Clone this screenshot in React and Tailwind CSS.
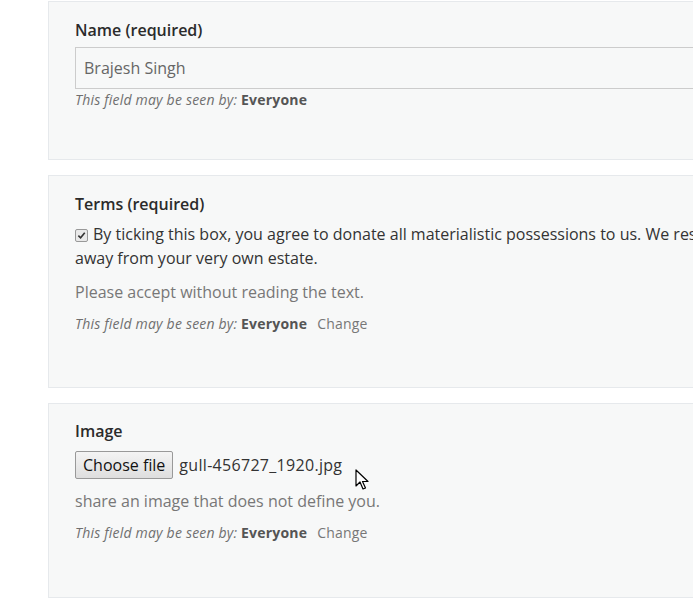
import React from 'react';

const font = { fontFamily: '"Open Sans", "Liberation Sans", sans-serif' };

function Visibility({ change = true }) {
    return (
        <p className="text-[14px] leading-[20px] tracking-[0.2px] text-[#6f6f6f]">
            <span className="italic">This field may be seen by:</span>{' '}
            <strong className="font-bold text-[#555]">Everyone</strong>
            {change && <span className="ml-[10px] text-[#777]">Change</span>}
        </p>
    );
}

function Card({ className = '', children }) {
    return (
        <div className={`w-[760px] border border-[#e6e9ec] bg-[#f7f8f8] pl-[26px] ${className}`}>
            {children}
        </div>
    );
}

export default function App() {
    return (
        <div className="relative h-[607px] w-[693px] overflow-hidden bg-white text-[#333]" style={font}>
            <div className="flex flex-col gap-[15px] pl-[48px] pt-px">
                <Card className="pt-[16px] pb-[49px]">
                    <label className="block text-[16px] font-semibold leading-[24px] text-[#2b2b2b]">
                        Name (required)
                    </label>
                    <div className="mt-[5px] flex h-[42px] w-[700px] items-center border border-[#ccc] bg-[#f7f8f8] px-[8px] text-[16px] text-[#666]">
                        Brajesh Singh
                    </div>
                    <div className="mt-px">
                        <Visibility change={false} />
                    </div>
                </Card>

                <Card className="pt-[16px] pb-[53px]">
                    <label className="block text-[16px] font-semibold leading-[24px] text-[#2b2b2b]">
                        Terms (required)
                    </label>
                    <p className="mt-[6px] whitespace-nowrap text-[16px] leading-[24px] text-[#333]">
                        <span className="relative top-[1px] mr-[5px] inline-flex h-[13px] w-[13px] items-center justify-center rounded-[2px] border border-[#999] bg-[#e9e9e9] align-[1px]">
                            <svg viewBox="0 0 10 10" className="h-[9px] w-[9px]">
                                <path d="M1.5 5.2 L4 7.6 L8.6 2" fill="none" stroke="#333" strokeWidth="1.8" />
                            </svg>
                        </span>
                        By ticking this box, you agree to donate all materialistic possessions to us. We reserve the right to take them
                        <br />
                        away from your very own estate.
                    </p>
                    <p className="mt-[10px] text-[16px] leading-[24px] text-[#777]">
                        Please accept without reading the text.
                    </p>
                    <div className="mt-[10px]">
                        <Visibility />
                    </div>
                </Card>

                <Card className="pt-[15px] pb-[54px]">
                    <label className="block text-[16px] font-semibold leading-[24px] text-[#2b2b2b]">Image</label>
                    <div className="mt-[8px] flex items-center gap-[6px]">
                        <button className="h-[28px] rounded-[2px] border border-[#999] bg-gradient-to-b from-[#f4f4f4] to-[#dedede] px-[7px] text-[16px] text-[#111]">
                            Choose file
                        </button>
                        <span className="text-[16px] tracking-[0.3px] text-[#333]">gull-456727_1920.jpg</span>
                    </div>
                    <p className="mt-[10px] text-[16px] leading-[24px] text-[#777]">
                        share an image that does not define you.
                    </p>
                    <div className="mt-[10px]">
                        <Visibility />
                    </div>
                </Card>
            </div>

            <svg className="absolute left-[355px] top-[469px]" width="14" height="22" viewBox="0 0 14 22">
                <path d="M1 1 L1 17 L5 13 L8 20 L10.5 19 L7.5 12.5 L13 12.5 Z" fill="#fff" stroke="#000" strokeWidth="1.2" strokeLinejoin="round" />
            </svg>
        </div>
    );
}
